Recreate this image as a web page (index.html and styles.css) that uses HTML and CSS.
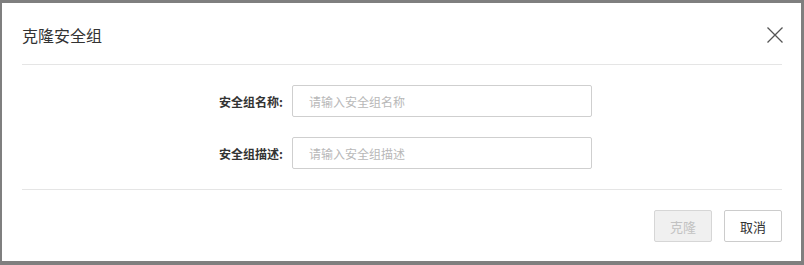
FILE: index.html
```html
<!DOCTYPE html>
<html lang="zh">
<head>
<meta charset="utf-8">
<title>克隆安全组</title>
<link rel="stylesheet" href="styles.css">
</head>
<body>
<div class="modal">
  <div class="modal-header">
    <span class="modal-title">克隆安全组</span>
    <svg class="close" width="16" height="16" viewBox="0 0 16 16"><path d="M0.5 0.5L15.5 15.5M15.5 0.5L0.5 15.5" stroke="#555" stroke-width="1.3" fill="none"/></svg>
  </div>
  <div class="modal-body">
    <div class="row">
      <label class="label">安全组名称:</label>
      <input class="input" type="text" placeholder="请输入安全组名称">
    </div>
    <div class="row">
      <label class="label">安全组描述:</label>
      <input class="input" type="text" placeholder="请输入安全组描述">
    </div>
  </div>
  <div class="modal-footer">
    <button class="btn btn-disabled" disabled>克隆</button>
    <button class="btn">取消</button>
  </div>
</div>
</body>
</html>
```
FILE: styles.css
```css
html, body {
  margin: 0;
  padding: 0;
}
body {
  background: #7f7f7f;
  width: 804px;
  height: 265px;
  overflow: hidden;
  font-family: "Noto Sans CJK SC", "Liberation Sans", sans-serif;
  color: #333;
}
.modal {
  margin: 3px 0 0 2px;
  width: 799px;
  height: 258px;
  background: #fff;
  box-sizing: border-box;
  padding: 0 19px 0 20px;
  display: flex;
  flex-direction: column;
}
.modal-header {
  display: flex;
  align-items: center;
  justify-content: space-between;
  padding-top: 3px;
  box-sizing: border-box;
  border-bottom: 1px solid #e5e5e5;
  height: 62px;
}
.modal-title {
  font-size: 16px;
  line-height: 24px;
  color: #333;
}
.close {
  display: block;
  margin-right: -1px;
}
.modal-body {
  padding: 20px 0;
  display: flex;
  flex-direction: column;
  gap: 20px;
  border-bottom: 1px solid #e5e5e5;
}
.row {
  display: flex;
  align-items: center;
  padding-left: 190px;
}
.label {
  width: 80px;
  box-sizing: border-box;
  padding-right: 9px;
  text-align: right;
  font-size: 12px;
  font-weight: bold;
  color: #333;
}
.input {
  width: 300px;
  height: 32px;
  box-sizing: border-box;
  border: 1px solid #cfcfcf;
  border-radius: 2px;
  padding: 0 16px;
  font-size: 12px;
  font-family: "Noto Sans CJK SC", "Liberation Sans", sans-serif;
  color: #333;
  outline: none;
}
.input::placeholder {
  color: #b8b8b8;
}
.modal-footer {
  display: flex;
  justify-content: flex-end;
  gap: 12px;
  padding-top: 20px;
}
.btn {
  width: 58px;
  height: 32px;
  box-sizing: border-box;
  border: 1px solid #cccccc;
  border-radius: 2px;
  background: #fff;
  font-size: 13px;
  font-family: "Noto Sans CJK SC", "Liberation Sans", sans-serif;
  color: #333;
  padding: 0;
}
.btn-disabled {
  background: #f0f0f0;
  color: #c2c2c2;
  border-color: #d6d6d6;
}
```
